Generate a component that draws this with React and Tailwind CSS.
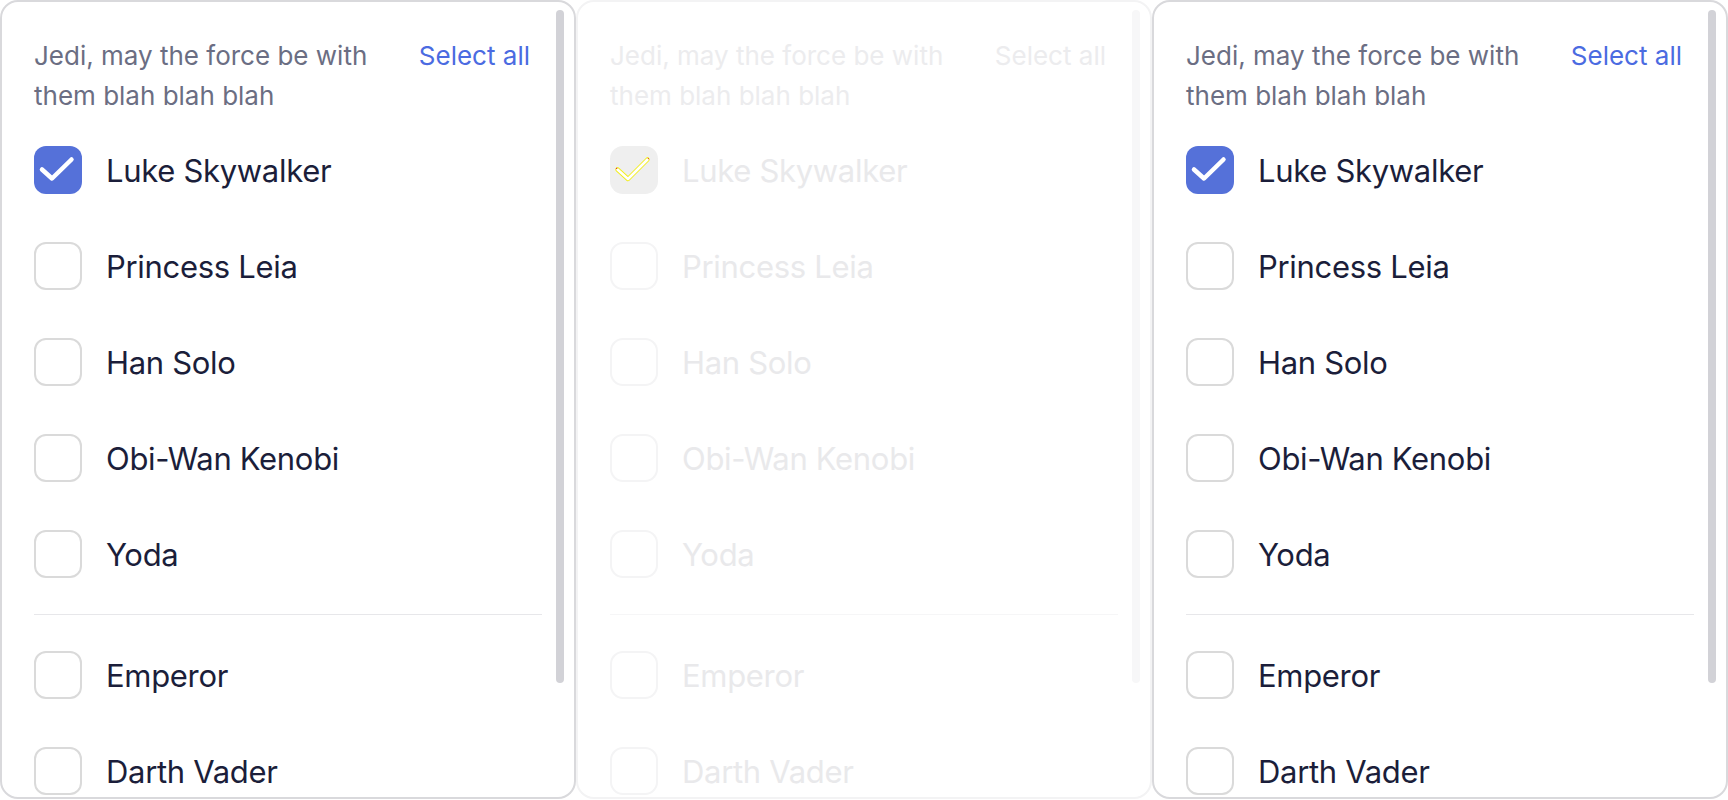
import React from "react";

const jedi = ["Luke Skywalker", "Princess Leia", "Han Solo", "Obi-Wan Kenobi", "Yoda"];
const sith = ["Emperor", "Darth Vader"];

function Check({ faded }) {
  if (faded) {
    return (
      <svg viewBox="0 0 48 48" className="h-full w-full" fill="none">
        <path d="M7.5 23.5 L18 33 L37.5 13.5" stroke="#f2ee1c" strokeWidth="4.5" strokeLinecap="round" strokeLinejoin="round" />
        <path d="M7.5 23.5 L18 33 L37.5 13.5" stroke="#ffffff" strokeWidth="2.5" strokeLinecap="round" strokeLinejoin="round" />
        <circle cx="6.6" cy="22.4" r="0.7" fill="#e53935" />
        <circle cx="38.4" cy="12.6" r="0.7" fill="#e53935" />
      </svg>
    );
  }
  return (
    <svg viewBox="0 0 48 48" className="h-full w-full" fill="none">
      <path d="M8 23.5 L18 32.5 L37.5 13.5" stroke="#ffffff" strokeWidth="4.5" strokeLinecap="round" strokeLinejoin="round" />
    </svg>
  );
}

function Row({ name, checked, faded }) {
  let box = "h-12 w-12 shrink-0 rounded-[12px] border-2 border-[#dadada] bg-white";
  if (faded) box = "h-12 w-12 shrink-0 rounded-[13px] border-2 border-[#f4f4f5] bg-white";
  if (checked && !faded) box = "h-12 w-12 shrink-0 rounded-[12px] bg-[#5571d9]";
  if (checked && faded) box = "h-12 w-12 shrink-0 rounded-[13px] bg-[#efefef]";

  return (
    <div className="flex h-24 items-center gap-6">
      <span className={box}>{checked && <Check faded={faded} />}</span>
      <span
        className={
          faded
            ? "text-[31px] leading-none tracking-[-0.01em] text-[#e9e9eb]"
            : "text-[31px] leading-none tracking-[-0.01em] text-[#1b1e3a]"
        }
      >
        {name}
      </span>
    </div>
  );
}

function Panel({ faded }) {
  return (
    <div
      className={
        faded
          ? "relative h-[799px] overflow-hidden rounded-[18px] border-2 border-[#f3f3f4] bg-white"
          : "relative h-[799px] overflow-hidden rounded-[18px] border-2 border-[#d9d9dc] bg-white"
      }
    >
      <div className="px-8 pt-[34px]">
        <div className="flex items-start gap-10 text-[26px] leading-[40px]">
          <p className={faded ? "flex-1 text-[#ececee]" : "flex-1 text-[#6b6e83]"}>
            Jedi, may the force be with them blah blah blah
          </p>
          <button className={faded ? "mr-3 text-[#ececee]" : "mr-3 text-[#4b6be1]"}>Select all</button>
        </div>

        <div className="mt-[6px]">
          {jedi.map((name, i) => (
            <Row key={name} name={name} checked={i === 0} faded={faded} />
          ))}
          <div className={faded ? "my-3 h-px bg-[#f6f6f7]" : "my-3 h-px bg-[#e7e7ea]"} />
          {sith.map((name) => (
            <Row key={name} name={name} faded={faded} />
          ))}
        </div>
      </div>

      <div
        className={
          faded
            ? "absolute right-[10px] top-2 h-[673px] w-2 rounded-full bg-[#f7f7f8]"
            : "absolute right-[10px] top-2 h-[673px] w-2 rounded-full bg-[#d2d2d7]"
        }
      />
    </div>
  );
}

export default function App() {
  return (
    <div className="grid h-[800px] w-[1728px] grid-cols-3 bg-white font-['Inter',sans-serif]">
      <Panel />
      <Panel faded />
      <Panel />
    </div>
  );
}
